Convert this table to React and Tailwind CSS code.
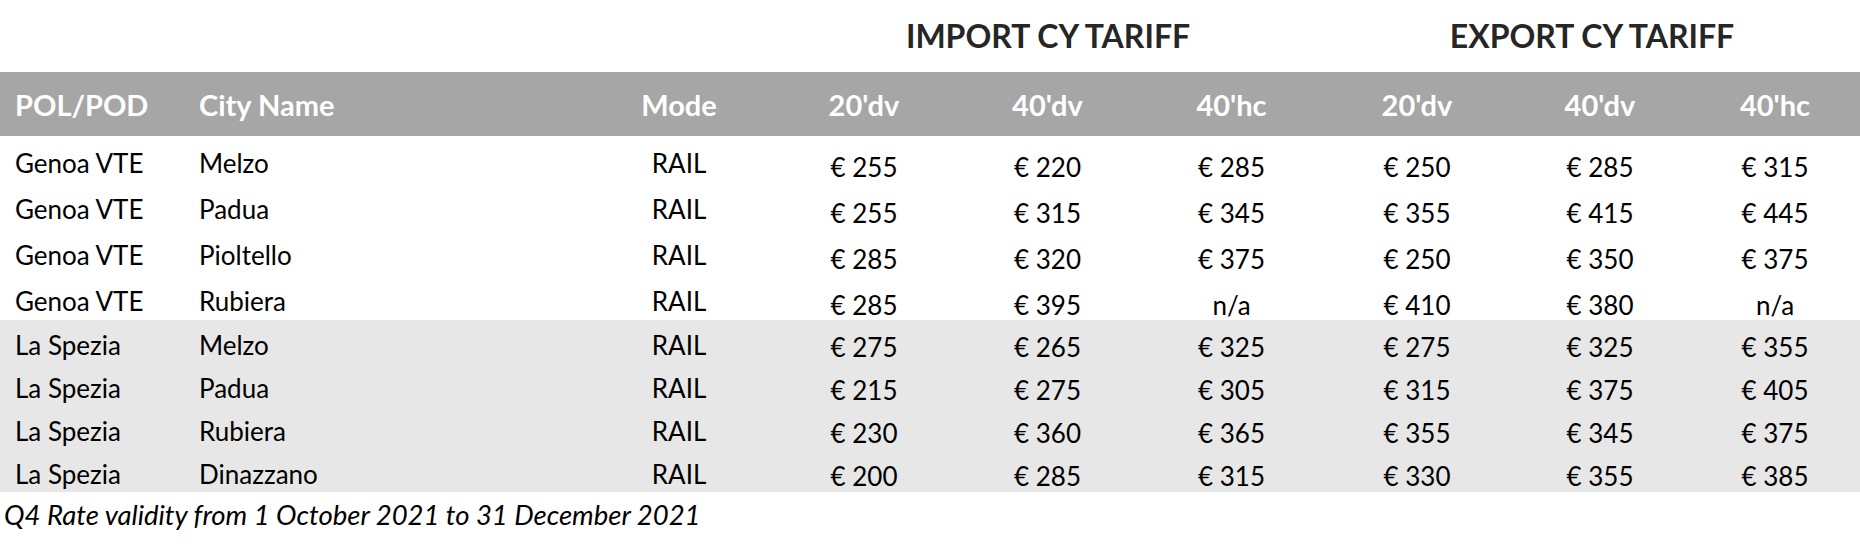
const cols = 'grid grid-cols-[185px_401px_186px_184px_183px_185px_186px_180px_1fr]';

const rows = [
  ['Genoa VTE', 'Melzo', '€ 255', '€ 220', '€ 285', '€ 250', '€ 285', '€ 315'],
  ['Genoa VTE', 'Padua', '€ 255', '€ 315', '€ 345', '€ 355', '€ 415', '€ 445'],
  ['Genoa VTE', 'Pioltello', '€ 285', '€ 320', '€ 375', '€ 250', '€ 350', '€ 375'],
  ['Genoa VTE', 'Rubiera', '€ 285', '€ 395', 'n/a', '€ 410', '€ 380', 'n/a'],
  ['La Spezia', 'Melzo', '€ 275', '€ 265', '€ 325', '€ 275', '€ 325', '€ 355'],
  ['La Spezia', 'Padua', '€ 215', '€ 275', '€ 305', '€ 315', '€ 375', '€ 405'],
  ['La Spezia', 'Rubiera', '€ 230', '€ 360', '€ 365', '€ 355', '€ 345', '€ 375'],
  ['La Spezia', 'Dinazzano', '€ 200', '€ 285', '€ 315', '€ 330', '€ 355', '€ 385'],
];

const sizes = ["20'dv", "40'dv", "40'hc", "20'dv", "40'dv", "40'hc"];

function Row({ data }) {
  const [pol, city, ...prices] = data;
  const spezia = pol === 'La Spezia';
  const text = spezia ? 'pt-[3px]' : 'pt-[4px]';
  return (
    <div className={`${cols} ${spezia ? 'h-[43px] bg-[#e7e7e7]' : 'h-[46px]'}`}>
      <div className={`flex items-center pl-[15px] ${text}`}>{pol}</div>
      <div className={`flex items-center pl-[14px] ${text}`}>{city}</div>
      <div className={`flex items-center justify-center ${text}`}>RAIL</div>
      {prices.map((p, i) => (
        <div
          key={i}
          className={`flex items-center justify-center ${spezia ? 'pt-[8px]' : 'pt-[12px]'}`}
        >
          {p}
        </div>
      ))}
    </div>
  );
}

export default function App() {
  return (
    <div className="h-[552px] w-[1860px] bg-white font-['Lato',sans-serif] text-[26px] text-black">
      <div className={`${cols} h-[72px]`}>
        <div className="col-start-4 col-span-3 flex items-center justify-center text-[32px] font-bold text-[#262626]">
          IMPORT CY TARIFF
        </div>
        <div className="col-span-3 flex items-center justify-center text-[32px] font-bold text-[#262626]">
          EXPORT CY TARIFF
        </div>
      </div>

      <div className={`${cols} h-[64px] bg-[#a6a6a6] text-[29px] font-bold text-white`}>
        <div className="flex items-center pl-[15px] pt-[2px]">POL/POD</div>
        <div className="flex items-center pl-[14px] pt-[2px]">City Name</div>
        <div className="flex items-center justify-center pt-[2px]">Mode</div>
        {sizes.map((s, i) => (
          <div key={i} className="flex items-center justify-center pt-[2px]">
            {s}
          </div>
        ))}
      </div>

      {rows.map((r, i) => (
        <Row key={i} data={r} />
      ))}

      <p className="h-[48px] pl-[4px] text-[27.5px] leading-[46px] italic">
        Q4 Rate validity from 1 October 2021 to 31 December 2021
      </p>
    </div>
  );
}
